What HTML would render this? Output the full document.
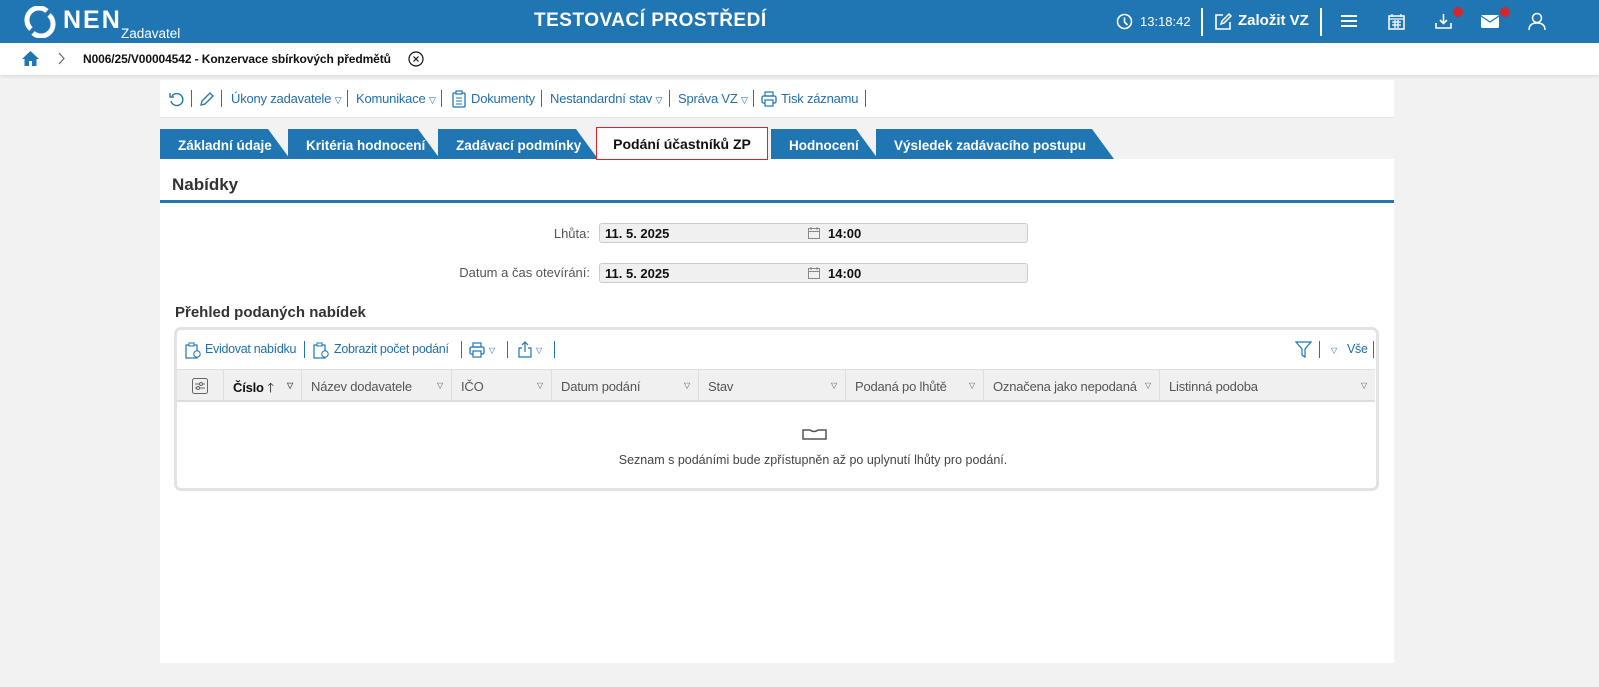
<!DOCTYPE html>
<html><head><meta charset="utf-8">
<style>
*{box-sizing:border-box;margin:0;padding:0}
body{width:1599px;height:687px;background:#f2f2f2;font-family:"Liberation Sans",Arial,sans-serif;position:relative;overflow:hidden;color:#333}
.a{position:absolute}
.hdr{left:0;top:0;width:1599px;height:43px;background:#1f76b3}
.bc{left:0;top:43px;width:1599px;height:32px;background:#fff;box-shadow:0 2px 3px rgba(0,0,0,.08)}
.w{color:#fff}
.tb{left:160px;top:80px;width:1234px;height:38px;background:#fff;border-bottom:1px solid #e6e6e6;font-size:13px;color:#1f6fae}
.tb span{position:absolute;top:11px;white-space:nowrap}
.sep{position:absolute;top:10px;width:1px;height:17px;background:#1f76b3}
.tab{position:absolute;top:129px;height:30px;background:#1f76b3;color:#fff;font-weight:bold;font-size:13.5px;padding:9px 0 0 18px;clip-path:polygon(0 0,calc(100% - 22px) 0,100% 100%,0 100%)}
.panel{left:160px;top:159px;width:1234px;height:504px;background:#fff}
.lbl{position:absolute;font-size:13px;color:#555;text-align:right;width:300px}
.inp{position:absolute;left:599px;width:429px;height:20px;background:#f0f0f0;border:1px solid #ccc;border-radius:3px;font-size:13px;font-weight:bold;color:#111}
.th{position:absolute;top:0;height:32px;border-right:1px solid #ddd;font-size:13px;color:#555;padding:9px 0 0 9px;white-space:nowrap}
.th .dd{position:absolute;right:8px;top:11px;font-size:8px;color:#555}
.tri{position:absolute;font-size:8px;top:8px}
</style></head><body>
<div class="a hdr"></div>
<svg class="a" style="left:23px;top:6px" width="34" height="32" viewBox="0 0 34 32"><path d="M8 23 A12 12 0 0 1 24 5" fill="none" stroke="#fff" stroke-width="5"/><path d="M26 9 A12 12 0 0 1 10 27" fill="none" stroke="#fff" stroke-width="5"/></svg>
<div class="a w" style="left:63px;top:6px;font-size:25px;font-weight:bold;letter-spacing:2px">NEN</div>
<div class="a w" style="left:121px;top:26px;font-size:13.5px">Zadavatel</div>
<div class="a w" style="left:534px;top:10px;font-size:19px;font-weight:bold;letter-spacing:.5px">TESTOVACÍ PROSTŘEDÍ</div>
<svg class="a" style="left:1116px;top:13px" width="17" height="17"><circle cx="8.5" cy="8.5" r="7" fill="none" stroke="#fff" stroke-width="1.6"/><path d="M8.5 4.5V9l3 3" fill="none" stroke="#fff" stroke-width="1.6"/></svg>
<div class="a w" style="left:1140px;top:14px;font-size:13px">13:18:42</div>
<div class="a" style="left:1201px;top:8px;width:2px;height:28px;background:#fff"></div>
<svg class="a" style="left:1214px;top:12px" width="18" height="19"><path d="M9 3H2v14h14V10" fill="none" stroke="#fff" stroke-width="1.6"/><path d="M7 12l1-3 7-7 2 2-7 7z" fill="none" stroke="#fff" stroke-width="1.5"/></svg>
<div class="a w" style="left:1238px;top:12px;font-size:15px;font-weight:bold">Založit VZ</div>
<div class="a" style="left:1320px;top:8px;width:2px;height:28px;background:#fff"></div>
<svg class="a" style="left:1341px;top:14px" width="16" height="14"><path d="M0 2h16M0 7h16M0 12h16" stroke="#fff" stroke-width="2"/></svg>
<svg class="a" style="left:1388px;top:13px" width="17" height="17"><rect x="1" y="3" width="15" height="13" fill="none" stroke="#fff" stroke-width="1.5"/><path d="M1 6h15M4 1v3M13 1v3M4 9h9M4 12h9M7 7v8M10 7v8" stroke="#fff" stroke-width="1.3"/></svg>
<svg class="a" style="left:1435px;top:13px" width="17" height="16"><path d="M8.5 1v9M5 7l3.5 3.5L12 7M1 10v5h15v-5" fill="none" stroke="#fff" stroke-width="1.6"/></svg>
<div class="a" style="left:1453px;top:7px;width:10px;height:10px;border-radius:50%;background:#d0282e"></div>
<svg class="a" style="left:1481px;top:15px" width="18" height="13"><rect x="0" y="0" width="18" height="13" rx="1.5" fill="#fff"/><path d="M0 1l9 6 9-6" fill="none" stroke="#1f76b3" stroke-width="1.3"/></svg>
<div class="a" style="left:1500px;top:7px;width:10px;height:10px;border-radius:50%;background:#d0282e"></div>
<svg class="a" style="left:1528px;top:12px" width="18" height="18"><circle cx="9" cy="6" r="4.5" fill="none" stroke="#fff" stroke-width="1.5"/><path d="M1 18q0-7 8-7t8 7" fill="none" stroke="#fff" stroke-width="1.5"/></svg>

<div class="a bc"></div>
<svg class="a" style="left:22px;top:50px" width="17" height="16"><path d="M8.5 1L0 9h2.5v7h4.5v-5h3v5h4.5V9H17z" fill="#1f76b3"/></svg>
<svg class="a" style="left:58px;top:52px" width="8" height="13"><path d="M1 1l5 5.5L1 12" fill="none" stroke="#666" stroke-width="1.2"/></svg>
<div class="a" style="left:83px;top:52px;font-size:12px;font-weight:bold;color:#111;letter-spacing:-.1px">N006/25/V00004542 - Konzervace sbírkových předmětů</div>
<svg class="a" style="left:408px;top:51px" width="16" height="16"><circle cx="8" cy="8" r="7" fill="none" stroke="#111" stroke-width="1.2"/><path d="M5.5 5.5l5 5M10.5 5.5l-5 5" stroke="#111" stroke-width="1.2"/></svg>

<div class="a tb">
<svg style="position:absolute;left:9px;top:11px" width="16" height="16"><path d="M3 5a6 6 0 1 1-1 5" fill="none" stroke="#1f76b3" stroke-width="1.4"/><path d="M1 2v4h4" fill="none" stroke="#1f76b3" stroke-width="1.4"/></svg>
<div class="sep" style="left:31px"></div>
<svg style="position:absolute;left:39px;top:11px" width="16" height="16"><path d="M2 14l1-4 8-8 3 3-8 8z" fill="none" stroke="#1f76b3" stroke-width="1.3"/></svg>
<div class="sep" style="left:61px"></div>
<span style="left:71px;letter-spacing:-.2px">Úkony zadavatele <small style="font-size:9px">▽</small></span>
<div class="sep" style="left:187px"></div>
<span style="left:196px;letter-spacing:-.2px">Komunikace <small style="font-size:9px">▽</small></span>
<div class="sep" style="left:281px"></div>
<svg style="position:absolute;left:292px;top:10px" width="14" height="18"><rect x="1" y="3" width="12" height="14" rx="1" fill="none" stroke="#1f76b3" stroke-width="1.3"/><rect x="4" y="1" width="6" height="3" fill="#fff" stroke="#1f76b3" stroke-width="1.2"/><path d="M4 8h6M4 11h6M4 14h6" stroke="#1f76b3"/></svg>
<span style="left:311px;letter-spacing:-.2px">Dokumenty</span>
<div class="sep" style="left:381px"></div>
<span style="left:390px;letter-spacing:-.2px">Nestandardní stav <small style="font-size:9px">▽</small></span>
<div class="sep" style="left:509px"></div>
<span style="left:518px;letter-spacing:-.2px">Správa VZ <small style="font-size:9px">▽</small></span>
<div class="sep" style="left:593px"></div>
<svg style="position:absolute;left:601px;top:11px" width="16" height="16"><rect x="4" y="1" width="8" height="4" fill="none" stroke="#1f76b3" stroke-width="1.2"/><rect x="1" y="5" width="14" height="7" rx="1.5" fill="none" stroke="#1f76b3" stroke-width="1.3"/><rect x="4" y="9" width="8" height="6" fill="#fff" stroke="#1f76b3" stroke-width="1.2"/></svg>
<span style="left:621px;letter-spacing:-.2px">Tisk záznamu</span>
<div class="sep" style="left:705px"></div>
</div>

<div class="tab" style="left:160px;width:130px">Základní údaje</div>
<div class="tab" style="left:288px;width:152px">Kritéria hodnocení</div>
<div class="tab" style="left:438px;width:160px">Zadávací podmínky</div>
<div class="tab" style="left:771px;width:107px">Hodnocení</div>
<div class="tab" style="left:876px;width:238px">Výsledek zadávacího postupu</div>
<div class="a panel"></div>
<div class="a" style="left:596px;top:127px;width:172px;height:33px;background:#fff;border:1px solid #e0202a;font-size:14px;font-weight:bold;color:#111;text-align:center;padding-top:8px">Podání účastníků ZP</div>
<div class="a" style="left:172px;top:175px;font-size:17px;font-weight:bold;color:#333">Nabídky</div>
<div class="a" style="left:160px;top:200px;width:1234px;height:3px;background:#1f76b3"></div>

<div class="lbl" style="left:290px;top:226px">Lhůta:</div>
<div class="inp" style="top:223px"><span style="position:absolute;left:5px;top:2px">11. 5. 2025</span><svg style="position:absolute;left:208px;top:3px" width="12" height="12"><rect x=".5" y="1.5" width="11" height="10" fill="none" stroke="#888"/><path d="M.5 4.5h11M3 0v3M9 0v3" stroke="#888"/></svg><span style="position:absolute;left:228px;top:2px">14:00</span></div>
<div class="lbl" style="left:290px;top:265px">Datum a čas otevírání:</div>
<div class="inp" style="top:263px"><span style="position:absolute;left:5px;top:2px">11. 5. 2025</span><svg style="position:absolute;left:208px;top:3px" width="12" height="12"><rect x=".5" y="1.5" width="11" height="10" fill="none" stroke="#888"/><path d="M.5 4.5h11M3 0v3M9 0v3" stroke="#888"/></svg><span style="position:absolute;left:228px;top:2px">14:00</span></div>

<div class="a" style="left:175px;top:304px;font-size:15px;font-weight:bold;color:#333">Přehled podaných nabídek</div>
<div class="a" style="left:174px;top:327px;width:1205px;height:164px;border:3px solid #e3e3e3;border-radius:7px;background:#fff"></div>
<div class="a" style="left:177px;top:338px;width:1200px;height:24px;font-size:12.5px;color:#1f6fae;letter-spacing:-.3px">
<svg style="position:absolute;left:8px;top:4px" width="16" height="17"><rect x="1" y="3" width="11" height="13" fill="none" stroke="#1f76b3" stroke-width="1.2"/><rect x="4" y="1" width="5" height="3" fill="#fff" stroke="#1f76b3"/><circle cx="12" cy="12" r="3.2" fill="#fff" stroke="#1f76b3"/></svg>
<span style="position:absolute;left:28px;top:4px">Evidovat nabídku</span>
<div class="sep" style="left:127px;top:3px"></div>
<svg style="position:absolute;left:136px;top:4px" width="16" height="17"><rect x="1" y="3" width="11" height="13" fill="none" stroke="#1f76b3" stroke-width="1.2"/><rect x="4" y="1" width="5" height="3" fill="#fff" stroke="#1f76b3"/><circle cx="12" cy="12" r="3.2" fill="#fff" stroke="#1f76b3"/></svg>
<span style="position:absolute;left:157px;top:4px">Zobrazit počet podání</span>
<div class="sep" style="left:284px;top:3px"></div>
<svg style="position:absolute;left:292px;top:4px" width="16" height="16"><rect x="4" y="1" width="8" height="4" fill="none" stroke="#1f76b3" stroke-width="1.2"/><rect x="1" y="5" width="14" height="7" rx="1.5" fill="none" stroke="#1f76b3" stroke-width="1.3"/><rect x="4" y="9" width="8" height="6" fill="#fff" stroke="#1f76b3" stroke-width="1.2"/></svg>
<span class="tri" style="left:312px">▽</span>
<div class="sep" style="left:330px;top:3px"></div>
<svg style="position:absolute;left:340px;top:3px" width="16" height="17"><path d="M5 7H2v9h12V7h-3M8 11V1M5 4l3-3 3 3" fill="none" stroke="#1f76b3" stroke-width="1.2"/></svg>
<span class="tri" style="left:359px">▽</span>
<div class="sep" style="left:377px;top:3px"></div>
<svg style="position:absolute;left:1118px;top:3px" width="17" height="17"><path d="M1 1h15l-6 7v8l-3-2V8z" fill="none" stroke="#1f76b3" stroke-width="1.2"/></svg>
<div class="sep" style="left:1142px;top:3px"></div>
<span class="tri" style="left:1154px">▽</span>
<span style="position:absolute;left:1170px;top:4px">Vše</span>
<div class="sep" style="left:1196px;top:3px"></div>
</div>
<div class="a" style="left:177px;top:369px;width:1198px;height:33px;background:#f0f0f0;border-top:1px solid #ddd;border-bottom:2px solid #ddd;letter-spacing:-.2px">
<div class="th" style="left:0;width:47px"><svg style="position:absolute;left:15px;top:8px" width="16" height="16"><rect x=".5" y=".5" width="15" height="15" rx="2" fill="none" stroke="#666"/><path d="M3 6h10M3 10h10" stroke="#666"/><circle cx="9" cy="6" r="1.5" fill="#f0f0f0" stroke="#666"/><circle cx="6" cy="10" r="1.5" fill="#f0f0f0" stroke="#666"/></svg></div>
<div class="th" style="left:47px;width:78px;color:#111;font-weight:bold">Číslo <span style="font-weight:normal">🡑</span><span class="dd">▽</span></div>
<div class="th" style="left:125px;width:150px">Název dodavatele<span class="dd">▽</span></div>
<div class="th" style="left:275px;width:100px">IČO<span class="dd">▽</span></div>
<div class="th" style="left:375px;width:147px">Datum podání<span class="dd">▽</span></div>
<div class="th" style="left:522px;width:147px">Stav<span class="dd">▽</span></div>
<div class="th" style="left:669px;width:138px">Podaná po lhůtě<span class="dd">▽</span></div>
<div class="th" style="left:807px;width:176px">Označena jako nepodaná<span class="dd">▽</span></div>
<div class="th" style="left:983px;width:215px;border-right:none">Listinná podoba<span class="dd">▽</span></div>
</div>
<svg class="a" style="left:802px;top:429px" width="25" height="12"><path d="M1 1h7q4 3 8 0h8v9H1z" fill="none" stroke="#555" stroke-width="1.5"/></svg>
<div class="a" style="left:500px;top:453px;width:626px;text-align:center;font-size:12.5px;color:#444">Seznam s podáními bude zpřístupněn až po uplynutí lhůty pro podání.</div>
</body></html>
